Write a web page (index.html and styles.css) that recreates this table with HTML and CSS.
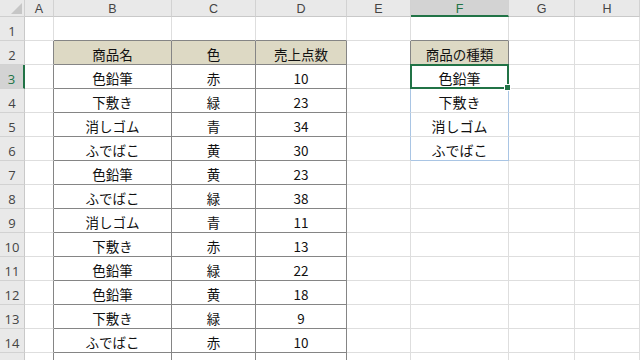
FILE: index.html
```html
<!DOCTYPE html>
<html>
<head>
    <meta charset="UTF-8">
    <title>商品リスト</title>
    <link rel="stylesheet" href="styles.css">
</head>
<body>

    <div id="sheet" class="sheet"></div>

    <script>
        const letters = ["", "A", "B", "C", "D", "E", "F", "G", "H"];

        // B:D sales list, header on row 2
        const sales = [
            ["商品名", "色", "売上点数"],
            ["色鉛筆", "赤", "10"],
            ["下敷き", "緑", "23"],
            ["消しゴム", "青", "34"],
            ["ふでばこ", "黄", "30"],
            ["色鉛筆", "黄", "23"],
            ["ふでばこ", "緑", "38"],
            ["消しゴム", "青", "11"],
            ["下敷き", "赤", "13"],
            ["色鉛筆", "緑", "22"],
            ["色鉛筆", "黄", "18"],
            ["下敷き", "緑", "9"],
            ["ふでばこ", "赤", "10"]
        ];

        // F column: unique product names
        const kinds = ["商品の種類", "色鉛筆", "下敷き", "消しゴム", "ふでばこ"];

        const activeRow = 3;
        const activeCol = 6;
        const lastLabel = 14; // row 15 only peeks in at the bottom edge

        function inTable(r, c) {
            return (c >= 2 && c <= 4 && r >= 2) || (c === 6 && r === 2);
        }

        function inList(r, c) {
            return c === 6 && r >= 3 && r <= 6;
        }

        const sheet = document.getElementById("sheet");

        for (let r = 0; r <= 15; r++) {
            for (let c = 0; c <= 8; c++) {
                const cell = document.createElement("div");
                let text = "";

                if (r === 0 && c === 0) {
                    cell.className = "corner";
                } else if (r === 0) {
                    cell.className = "colhead" + (c === activeCol ? " active" : "");
                    text = letters[c];
                } else if (c === 0) {
                    cell.className = "rowhead" + (r === activeRow ? " active" : "");
                    if (r <= lastLabel) text = r;
                } else {
                    cell.className = "cell";

                    if (inTable(r, c) || inTable(r, c + 1)) cell.classList.add("dr");
                    else if (inList(r, c) || inList(r, c + 1)) cell.classList.add("br");

                    if (inTable(r, c) || inTable(r + 1, c)) cell.classList.add("db");
                    else if (inList(r, c) && !inList(r + 1, c)) cell.classList.add("bb");

                    if (r === 2 && inTable(r, c)) cell.classList.add("head");

                    if (c >= 2 && c <= 4 && sales[r - 2]) text = sales[r - 2][c - 2];
                    if (c === 6 && kinds[r - 2]) text = kinds[r - 2];
                    if (inList(r, c)) cell.classList.add("list");
                    if (r === activeRow && c === activeCol) cell.classList.add("selected");
                }

                cell.textContent = text;
                sheet.appendChild(cell);
            }
        }
    </script>

</body>
</html>
```

FILE: styles.css
```css
body {
    margin: 0;
    overflow: hidden;
    background: #ffffff;
    font-family: "Noto Sans CJK JP", "Noto Sans", sans-serif;
}

.sheet {
    display: grid;
    grid-template-columns: 25px 29px 118px 84px 91px 64px 98px 66px 65px;
    grid-template-rows: 17px repeat(15, 24px);
    width: 640px;
}

.sheet > div {
    box-sizing: border-box;
    display: flex;
    align-items: center;
    justify-content: center;
}

.corner {
    position: relative;
    background: #e9e9e9;
    border-right: 1px solid #cfcfcf;
    border-bottom: 1px solid #cfcfcf;
}

.corner::after {
    content: "";
    position: absolute;
    right: 2px;
    bottom: 2px;
    border-left: 11px solid transparent;
    border-bottom: 11px solid #c6c6c6;
}

.colhead {
    background: #e9e9e9;
    border-right: 1px solid #d2d2d2;
    border-bottom: 1px solid #c9c9c9;
    font-family: "Liberation Sans", Arial, sans-serif;
    font-size: 12.5px;
    color: #444444;
    padding-top: 2px;
}

.colhead.active {
    background: #d3d3d3;
    color: #217346;
    border-bottom: 2px solid #217346;
}

.rowhead {
    background: #e9e9e9;
    border-right: 1px solid #c9c9c9;
    border-bottom: 1px solid #d2d2d2;
    font-family: "Open Sans", "Liberation Sans", sans-serif;
    font-size: 13px;
    color: #444444;
    padding-top: 4px;
}

.rowhead.active {
    background: #d3d3d3;
    color: #217346;
    border-right: 2px solid #217346;
}

.cell {
    border-right: 1px solid #dedede;
    border-bottom: 1px solid #dedede;
    font-size: 13.5px;
    color: #111111;
    padding-top: 2px;
}

.cell.dr {
    border-right-color: #858585;
}

.cell.db {
    border-bottom-color: #858585;
}

.cell.br {
    border-right-color: #a9c5e4;
}

.cell.bb {
    border-bottom-color: #a9c5e4;
}

.cell.head {
    background: #ddd9c4;
}

.cell.list {
    font-size: 14px;
}

/* active cell frame with fill handle */
.cell.selected {
    position: relative;
}

.cell.selected::before {
    content: "";
    position: absolute;
    left: -1px;
    top: -1px;
    right: -1px;
    bottom: -1px;
    border: 2px solid #217346;
}

.cell.selected::after {
    content: "";
    position: absolute;
    right: -3px;
    bottom: -3px;
    width: 5px;
    height: 5px;
    background: #217346;
    border: 1px solid #ffffff;
}
```
